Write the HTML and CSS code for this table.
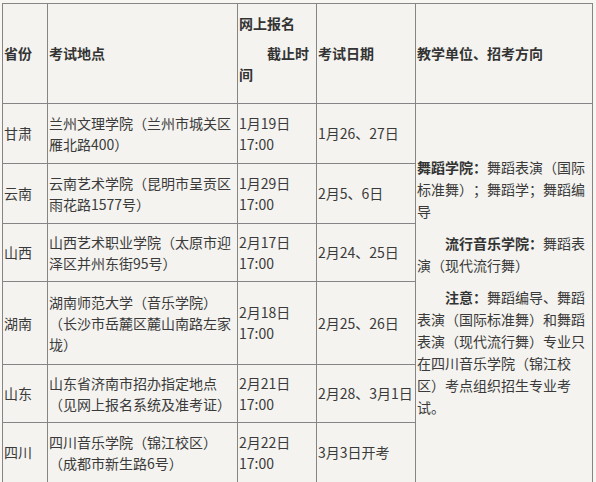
FILE: index.html
```html
<!DOCTYPE html>
<html lang="zh-CN">
<head>
<meta charset="utf-8">
<link rel="stylesheet" href="styles.css">
</head>
<body>
<div class="wrap">
<table class="tbl">
  <colgroup>
    <col class="c1"><col class="c2"><col class="c3"><col class="c4"><col class="c5">
  </colgroup>
  <tr class="head">
    <th>省份</th>
    <th>考试地点</th>
    <th class="hcell"><p class="hp">网上报名</p><p class="hp indent">截止时间</p></th>
    <th>考试日期</th>
    <th>教学单位、招考方向</th>
  </tr>
  <tr class="r2">
    <td>甘肃</td>
    <td>兰州文理学院（兰州市城关区雁北路400）</td>
    <td>1月19日<br>17:00</td>
    <td>1月26、27日</td>
    <td rowspan="6" class="desc">
      <p class="dp"><b>舞蹈学院：</b><span>舞蹈表演（国际</span><span class="rest">标准舞）；舞蹈学；舞蹈编导</span></p>
      <p class="dp indent"><b>流行音乐学院：</b><span>舞蹈表</span><span class="rest">演（现代流行舞）</span></p>
      <p class="dp indent"><b>注意：</b><span>舞蹈编导、舞蹈</span><span class="rest">表演（国际标准舞）和舞蹈表演（现代流行舞）专业只在四川音乐学院（锦江校区）考点组织招生专业考试。</span></p>
    </td>
  </tr>
  <tr class="r2">
    <td>云南</td>
    <td>云南艺术学院（昆明市呈贡区雨花路1577号）</td>
    <td>1月29日<br>17:00</td>
    <td>2月5、6日</td>
  </tr>
  <tr class="r2s">
    <td>山西</td>
    <td>山西艺术职业学院（太原市迎泽区并州东街95号）</td>
    <td>2月17日<br>17:00</td>
    <td>2月24、25日</td>
  </tr>
  <tr class="r3">
    <td>湖南</td>
    <td>湖南师范大学（音乐学院）（长沙市岳麓区麓山南路左家垅）</td>
    <td>2月18日<br>17:00</td>
    <td>2月25、26日</td>
  </tr>
  <tr class="r2s">
    <td>山东</td>
    <td>山东省济南市招办指定地点（见网上报名系统及准考证）</td>
    <td>2月21日<br>17:00</td>
    <td>2月28、3月1日</td>
  </tr>
  <tr class="r2">
    <td>四川</td>
    <td>四川音乐学院（锦江校区）（成都市新生路6号）</td>
    <td>2月22日<br>17:00</td>
    <td>3月3日开考</td>
  </tr>
</table>
</div>
</body>
</html>
```

FILE: styles.css
```css
html, body {
  margin: 0;
  padding: 0;
  background: #f7f6f3;
}
.wrap {
  padding: 3px 0 0 2px;
}
.tbl {
  width: 590px;
  border-collapse: collapse;
  table-layout: fixed;
  background: #f4f3ef;
  border: 1px solid #7a7a7a;
  font-family: "Noto Sans CJK SC", "Noto Sans", sans-serif;
  font-size: 14px;
  line-height: 21px;
  color: #3a3a3a;
  text-spacing-trim: space-all;
}
.c1 { width: 45px; }
.c2 { width: 190px; }
.c3 { width: 79px; }
.c4 { width: 99px; }
.c5 { width: 177px; }
.tbl th, .tbl td {
  border: 1px solid #858585;
  padding: 0 1px 0 1px;
  vertical-align: middle;
  text-align: left;
}
.tbl th {
  font-weight: bold;
  color: #333;
}
.head { height: 100px; }
.r2 { height: 60px; }
.r2s { height: 58px; }
.r3 { height: 83px; }
.tbl th.hcell {
  padding-bottom: 10px;
}
.hp {
  margin: 0;
}
.hp + .hp {
  margin-top: 9px;
}
.indent {
  text-indent: 2em;
}
.tbl td.desc {
  line-height: 22px;
  padding-bottom: 12px;
}
.dp {
  margin: 0;
}
.dp + .dp {
  margin-top: 10px;
}
.dp b {
  color: #333;
}
.rest {
  display: block;
  text-indent: 0;
}
```
